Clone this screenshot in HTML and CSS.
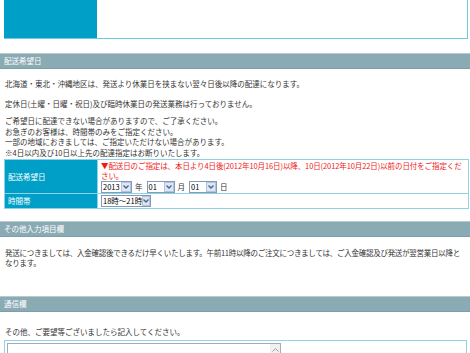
FILE: index.html
```html
<!DOCTYPE html>
<html lang="ja">
<head>
    <meta charset="UTF-8">
    <title>配送希望日</title>
    <link rel="stylesheet" href="styles.css">
</head>
<body>
    <div class="top">
        <div class="logo"></div>
    </div>

    <h2 class="bar">配送希望日</h2>
    <div class="section first">
        <p class="gap-l">北海道・東北・沖縄地区は、発送より休業日を挟まない翌々日後以降の配達になります。</p>
        <p class="gap-m">定休日(土曜・日曜・祝日)及び臨時休業日の発送業務は行っておりません。</p>
        <p class="gap-s">ご希望日に配達できない場合がありますので、ご了承ください。<br>
        お急ぎのお客様は、時間帯のみをご指定ください。<br>
        一部の地域におきましては、ご指定いただけない場合があります。<br>
        ※4日以内及び10日以上先の配達指定はお断りいたします。</p>

        <table class="form">
            <tr class="row-date">
                <th>配送希望日</th>
                <td>
                    <div class="note">▼配送日のご指定は、本日より4日後(2012年10月16日)以降、10日(2012年10月22日)以前の日付をご指定ください。</div>
                    <div class="date">
                        <span class="sel w30"><span class="val">2013</span><span class="btn"><svg width="6" height="4" viewBox="0 0 6 4"><path d="M0.5 0.5L3 3L5.5 0.5" fill="none" stroke="#4d6185" stroke-width="1.3"/></svg></span></span>
                        <span class="unit">年</span>
                        <span class="sel w27"><span class="val">01</span><span class="btn"><svg width="6" height="4" viewBox="0 0 6 4"><path d="M0.5 0.5L3 3L5.5 0.5" fill="none" stroke="#4d6185" stroke-width="1.3"/></svg></span></span>
                        <span class="unit">月</span>
                        <span class="sel w27"><span class="val">01</span><span class="btn"><svg width="6" height="4" viewBox="0 0 6 4"><path d="M0.5 0.5L3 3L5.5 0.5" fill="none" stroke="#4d6185" stroke-width="1.3"/></svg></span></span>
                        <span class="unit">日</span>
                    </div>
                </td>
            </tr>
            <tr class="row-time">
                <th>時間帯</th>
                <td>
                    <span class="sel w50"><span class="val">18時～21時</span><span class="btn"><svg width="6" height="4" viewBox="0 0 6 4"><path d="M0.5 0.5L3 3L5.5 0.5" fill="none" stroke="#4d6185" stroke-width="1.3"/></svg></span></span>
                </td>
            </tr>
        </table>
    </div>

    <h2 class="bar b2">その他入力項目欄</h2>
    <div class="section second">
        <p>発送につきましては、入金確認後できるだけ早くいたします。午前11時以降のご注文につきましては、ご入金確認及び発送が翌営業日以降となります。</p>
    </div>

    <h2 class="bar">通信欄</h2>
    <div class="section third">
        <p>その他、ご要望等ございましたら記入してください。</p>
        <div class="msgbox">
            <div class="textarea">
                <span class="scroll">
                    <svg width="7" height="5" viewBox="0 0 7 5"><path d="M0.5 4.5L3.5 1.5L6.5 4.5" fill="none" stroke="#a0a0a0"/></svg>
                </span>
            </div>
        </div>
    </div>
</body>
</html>
```

FILE: styles.css
```css
body {
    margin: 0;
    font-family: "Noto Sans CJK JP", sans-serif;
    font-size: 7.5px;
    color: #333;
    background-color: #fff;
}
.top {
    margin: 0 2px 0 4px;
    height: 38px;
    border-right: 1px solid #6ccae2;
    border-bottom: 1px solid #6ccae2;
    display: flex;
}
.logo {
    width: 93px;
    height: 38px;
    background-color: #009fc8;
}
.bar {
    margin: 14px 0 0 0;
    height: 14px;
    padding-left: 4px;
    font-size: 7.5px;
    font-weight: normal;
    line-height: 14px;
    color: #fff;
    background-color: #8aaab4;
    border-top: 1px solid #b6cad0;
    border-bottom: 1px solid #7f9ea8;
}
.bar.b2 {
    margin-top: 12px;
}
.section {
    padding: 10px 4px 0 5px;
}
.section p {
    margin: 0 0 9px 0;
    line-height: 10.6px;
}
.section p.gap-l {
    margin-bottom: 9px;
}
.section p.gap-m {
    margin-bottom: 7px;
}
.section p.gap-s {
    margin-bottom: 0;
}
.section.second {
    padding-top: 11px;
    padding-bottom: 4px;
}
.section.second p {
    letter-spacing: -0.26px;
}
.section.third {
    padding-top: 15px;
}
.section.third p {
    margin-bottom: 3px;
}
.form {
    width: 465px;
    margin-left: -1px;
    border-collapse: collapse;
}
.form th, .form td {
    border: 1px solid #8fd2e4;
    padding: 0 3px;
    text-align: left;
    vertical-align: middle;
}
.form th {
    width: 86px;
    font-weight: normal;
    color: #fff;
    background-color: #009fc8;
}
.row-date td {
    height: 31px;
    padding-top: 1px;
}
.row-time td {
    height: 14px;
}
.note {
    color: #f01818;
    line-height: 10px;
    letter-spacing: -0.1px;
}
.date {
    margin-top: 0;
    display: flex;
    align-items: center;
    gap: 3px;
}
.unit {
    margin-right: 1px;
}
.sel {
    display: inline-flex;
    align-items: center;
    height: 12px;
    border: 1px solid #7f9db9;
    background-color: #fff;
    box-sizing: border-box;
    vertical-align: middle;
    white-space: nowrap;
}
.sel .val {
    flex: 1;
    padding-left: 1px;
    font-size: 7.5px;
    line-height: 10px;
    color: #000;
}
.sel .btn {
    width: 10px;
    height: 10px;
    display: flex;
    align-items: center;
    justify-content: center;
    background-color: #dce6f4;
    border: 1px solid #b3c4dc;
    box-sizing: border-box;
}
.w30 { width: 31px; }
.w27 { width: 28px; }
.w50 { width: 50px; }
.msgbox {
    margin: 0 -1px 0 -1px;
    padding: 2px;
    height: 20px;
    border: 1px solid #8fd2e4;
}
.textarea {
    width: 272px;
    height: 30px;
    border: 1px solid #a5acb5;
    position: relative;
}
.scroll {
    position: absolute;
    right: 0;
    top: 0;
    width: 10px;
    height: 10px;
    display: flex;
    align-items: center;
    justify-content: center;
    background-color: #f0f0f0;
}
```
